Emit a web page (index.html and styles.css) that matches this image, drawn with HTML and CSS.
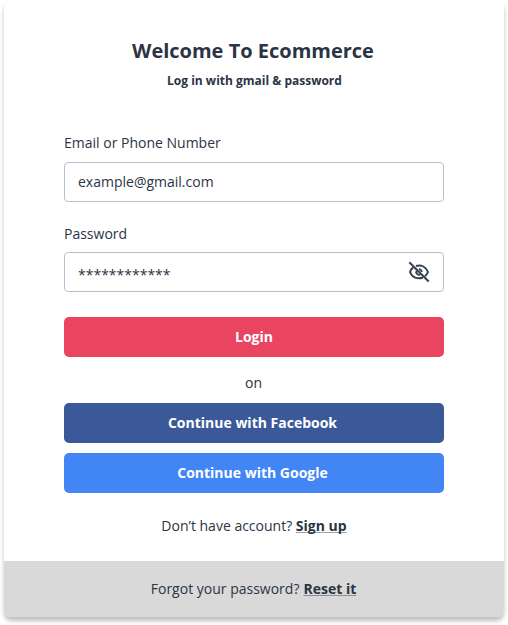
FILE: index.html
```html
<!DOCTYPE html>
<html lang="en">
<head>
<meta charset="utf-8">
<title>Login</title>
<link rel="stylesheet" href="styles.css">
</head>
<body>
<main class="card">
  <div class="content">
    <h1 class="title">Welcome To Ecommerce</h1>
    <p class="subtitle">Log in with gmail &amp; password</p>
    <label class="label">Email or Phone Number</label>
    <div class="field"><span>example@gmail.com</span></div>
    <label class="label password-label">Password</label>
    <div class="field"><span class="stars">************</span>
      <svg class="eye" viewBox="0 0 24 24" width="24" height="24" fill="none" stroke="#384152" stroke-width="2">
        <path d="M2.300 2.300 21.700 21.500"/>
        <path d="M9 6C14.500 4.500 19 7 21 12 20.300 13.800 19.300 15.100 18 16.100M6.200 7.400C4.700 8.600 3.700 10 3 12 5 17.500 10.500 19.600 16 17.500"/>
        <path d="M12 9.300A2.700 2.700 0 0 1 14.700 12M9.700 10.700A2.700 2.700 0 0 0 13.300 14.400"/>
      </svg>
    </div>
    <div class="btn login">Login</div>
    <p class="or">on</p>
    <div class="btn facebook">Continue with Facebook</div>
    <div class="btn google">Continue with Google</div>
    <p class="signup">Don’t have account? <a class="link">Sign up</a></p>
  </div>
  <footer class="footer">Forgot your password? <a class="link">Reset it</a></footer>
</main>
</body>
</html>
```
FILE: styles.css
```css
* { box-sizing: border-box; }
body { margin: 0; height: 625px; overflow: hidden; background: #fff; font: 14px/20px "Open Sans", sans-serif; color: #2b3445; }
.card { width: 500px; height: 617px; margin: 0 4px; border-radius: 8px; overflow: hidden; background: #fff; box-shadow: 0 4px 4px rgba(0,0,0,.25); display: flex; flex-direction: column; }
.content { height: 561px; padding: 36px 60px 0; }
.title { margin: 0 2px 0 0; font-size: 20px; line-height: 30px; font-weight: 700; text-align: center; }
.subtitle { margin: 6px 0 44px 1px; font-size: 12px; line-height: 18px; font-weight: 700; text-align: center; }
.label { display: block; height: 28px; line-height: 18px; }
.password-label { line-height: 20px; }
.field { display: flex; align-items: center; justify-content: space-between; height: 40px; margin-bottom: 22px; padding: 0 12px 0 13px; border: 1px solid #babfcf; border-radius: 4px; }
.stars { padding-top: 6px; }
.btn { display: flex; align-items: center; justify-content: center; height: 40px; border-radius: 5px; color: #fff; font-weight: 700; }
.login { background: #e94560; margin-top: 25px; }
.or { margin: 16px 1px 10px 0; text-align: center; }
.facebook { background: #3b5998; margin-bottom: 10px; padding-right: 3px; }
.google { background: #4285f4; padding-right: 3px; }
.signup { margin: 23px 0 0; text-align: center; }
.link { font-weight: 700; text-decoration: underline; text-decoration-color: rgba(43,52,69,.45); text-decoration-thickness: 1px; text-decoration-skip-ink: none; }
.footer { display: flex; gap: 4px; align-items: center; justify-content: center; height: 56px; padding-right: 1px; background: #d9d9d9; }
```
